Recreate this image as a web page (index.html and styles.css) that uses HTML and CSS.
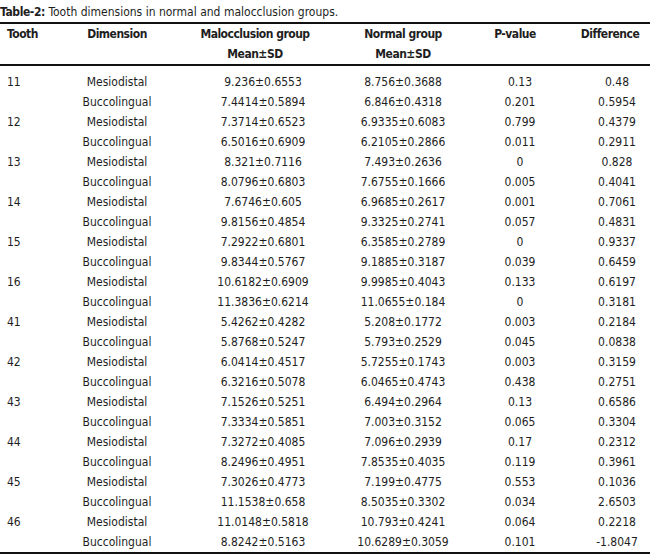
FILE: index.html
```html
<!DOCTYPE html>
<html>
<head>
<meta charset="utf-8">
<link rel="stylesheet" href="styles.css">
</head>
<body>
<div class="title"><b>Table-2:</b> Tooth dimensions in normal and malocclusion groups.</div>
<table class="tbl">
<colgroup>
<col class="c1"><col class="c2"><col class="c3"><col class="c4"><col class="c5"><col class="c6">
</colgroup>
<thead>
<tr><th class="tooth">Tooth</th><th>Dimension</th><th>Malocclusion group<br>Mean±SD</th><th>Normal group<br>Mean±SD</th><th class="pv">P-value</th><th class="df">Difference</th></tr>
</thead>
<tbody>
<tr><td class="tooth">11</td><td>Mesiodistal</td><td class="mal">9.236±0.6553</td><td>8.756±0.3688</td><td>0.13</td><td class="df">0.48</td></tr>
<tr><td class="tooth"></td><td>Buccolingual</td><td class="mal">7.4414±0.5894</td><td>6.846±0.4318</td><td>0.201</td><td class="df">0.5954</td></tr>
<tr><td class="tooth">12</td><td>Mesiodistal</td><td class="mal">7.3714±0.6523</td><td>6.9335±0.6083</td><td>0.799</td><td class="df">0.4379</td></tr>
<tr><td class="tooth"></td><td>Buccolingual</td><td class="mal">6.5016±0.6909</td><td>6.2105±0.2866</td><td>0.011</td><td class="df">0.2911</td></tr>
<tr><td class="tooth">13</td><td>Mesiodistal</td><td class="mal">8.321±0.7116</td><td>7.493±0.2636</td><td>0</td><td class="df">0.828</td></tr>
<tr><td class="tooth"></td><td>Buccolingual</td><td class="mal">8.0796±0.6803</td><td>7.6755±0.1666</td><td>0.005</td><td class="df">0.4041</td></tr>
<tr><td class="tooth">14</td><td>Mesiodistal</td><td class="mal">7.6746±0.605</td><td>6.9685±0.2617</td><td>0.001</td><td class="df">0.7061</td></tr>
<tr><td class="tooth"></td><td>Buccolingual</td><td class="mal">9.8156±0.4854</td><td>9.3325±0.2741</td><td>0.057</td><td class="df">0.4831</td></tr>
<tr><td class="tooth">15</td><td>Mesiodistal</td><td class="mal">7.2922±0.6801</td><td>6.3585±0.2789</td><td>0</td><td class="df">0.9337</td></tr>
<tr><td class="tooth"></td><td>Buccolingual</td><td class="mal">9.8344±0.5767</td><td>9.1885±0.3187</td><td>0.039</td><td class="df">0.6459</td></tr>
<tr><td class="tooth">16</td><td>Mesiodistal</td><td class="mal">10.6182±0.6909</td><td>9.9985±0.4043</td><td>0.133</td><td class="df">0.6197</td></tr>
<tr><td class="tooth"></td><td>Buccolingual</td><td class="mal">11.3836±0.6214</td><td>11.0655±0.184</td><td>0</td><td class="df">0.3181</td></tr>
<tr><td class="tooth">41</td><td>Mesiodistal</td><td class="mal">5.4262±0.4282</td><td>5.208±0.1772</td><td>0.003</td><td class="df">0.2184</td></tr>
<tr><td class="tooth"></td><td>Buccolingual</td><td class="mal">5.8768±0.5247</td><td>5.793±0.2529</td><td>0.045</td><td class="df">0.0838</td></tr>
<tr><td class="tooth">42</td><td>Mesiodistal</td><td class="mal">6.0414±0.4517</td><td>5.7255±0.1743</td><td>0.003</td><td class="df">0.3159</td></tr>
<tr><td class="tooth"></td><td>Buccolingual</td><td class="mal">6.3216±0.5078</td><td>6.0465±0.4743</td><td>0.438</td><td class="df">0.2751</td></tr>
<tr><td class="tooth">43</td><td>Mesiodistal</td><td class="mal">7.1526±0.5251</td><td>6.494±0.2964</td><td>0.13</td><td class="df">0.6586</td></tr>
<tr><td class="tooth"></td><td>Buccolingual</td><td class="mal">7.3334±0.5851</td><td>7.003±0.3152</td><td>0.065</td><td class="df">0.3304</td></tr>
<tr><td class="tooth">44</td><td>Mesiodistal</td><td class="mal">7.3272±0.4085</td><td>7.096±0.2939</td><td>0.17</td><td class="df">0.2312</td></tr>
<tr><td class="tooth"></td><td>Buccolingual</td><td class="mal">8.2496±0.4951</td><td>7.8535±0.4035</td><td>0.119</td><td class="df">0.3961</td></tr>
<tr><td class="tooth">45</td><td>Mesiodistal</td><td class="mal">7.3026±0.4773</td><td>7.199±0.4775</td><td>0.553</td><td class="df">0.1036</td></tr>
<tr><td class="tooth"></td><td>Buccolingual</td><td class="mal">11.1538±0.658</td><td>8.5035±0.3302</td><td>0.034</td><td class="df">2.6503</td></tr>
<tr><td class="tooth">46</td><td>Mesiodistal</td><td class="mal">11.0148±0.5818</td><td>10.793±0.4241</td><td>0.064</td><td class="df">0.2218</td></tr>
<tr><td class="tooth"></td><td>Buccolingual</td><td class="mal">8.8242±0.5163</td><td>10.6289±0.3059</td><td>0.101</td><td class="df">-1.8047</td></tr>
</tbody>
</table>
</body>
</html>
```
FILE: styles.css
```css
html, body {
  margin: 0;
  padding: 0;
  background: #fff;
}
body {
  width: 650px;
  font-family: "DejaVu Sans Condensed", "Liberation Sans", sans-serif;
  font-size: 12px;
  color: #1e1e1e;
}
.title {
  padding: 2px 0 0 0;
  line-height: 20px;
  height: 20px;
}
.title b {
  font-weight: bold;
  letter-spacing: -0.4px;
}
.tbl {
  width: 650px;
  border-collapse: collapse;
  table-layout: fixed;
  border-top: 2px solid #111;
  border-bottom: 2px solid #111;
}
.c1 { width: 70px; }
.c2 { width: 94px; }
.c3 { width: 182px; }
.c4 { width: 114px; }
.c5 { width: 120px; }
.c6 { width: 70px; }
.tbl th, .tbl td {
  padding: 0;
  line-height: 20px;
  text-align: center;
  white-space: nowrap;
  vertical-align: top;
}
.tbl th {
  font-weight: bold;
  letter-spacing: -0.5px;
  border-bottom: 2px solid #111;
  height: 40px;
}
.tbl .tooth {
  text-align: left;
  padding-left: 7px;
}
.tbl .mal {
  padding-left: 16px;
}
.tbl th.pv {
  padding-right: 10px;
}
.tbl th.df {
  padding-right: 10px;
}
.tbl td.df {
  padding-left: 4px;
}
.tbl tbody tr:first-child td {
  padding-top: 6px;
}
```
